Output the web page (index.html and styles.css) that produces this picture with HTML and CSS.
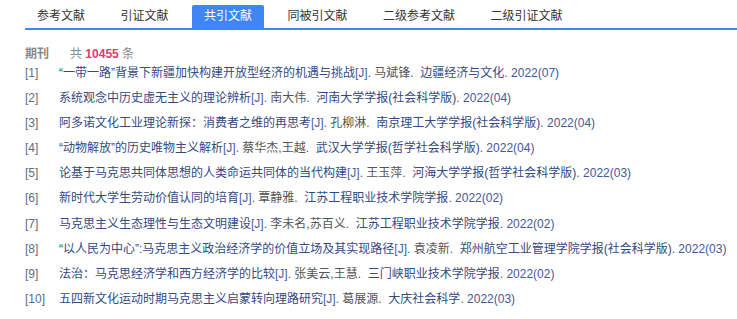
FILE: index.html
```html
<!DOCTYPE html>
<html lang="zh-CN">
<head>
<meta charset="utf-8">
<title>共引文献</title>
<link rel="stylesheet" href="styles.css">
</head>
<body>
<div class="page">
  <div class="tabs">
    <span class="tab">参考文献</span>
    <span class="tab">引证文献</span>
    <span class="tab active">共引文献</span>
    <span class="tab">同被引文献</span>
    <span class="tab">二级参考文献</span>
    <span class="tab">二级引证文献</span>
  </div>
  <div class="summary">
    <span class="kind">期刊</span>
    <span class="count">共 <b class="num">10455</b> 条</span>
  </div>
  <ul class="list">
    <li><span class="idx">[1]</span><span class="ttl">“一带一路”背景下新疆加快构建开放型经济的机遇与挑战</span><span class="tp">[J]</span><span class="au">. 马斌锋.&nbsp; </span><span class="jn">边疆经济与文化</span><span class="au">. </span><span class="yr">2022(07)</span></li>
    <li><span class="idx">[2]</span><span class="ttl">系统观念中历史虚无主义的理论辨析</span><span class="tp">[J]</span><span class="au">. 南大伟.&nbsp; </span><span class="jn">河南大学学报(社会科学版)</span><span class="au">. </span><span class="yr">2022(04)</span></li>
    <li><span class="idx">[3]</span><span class="ttl">阿多诺文化工业理论新探：消费者之维的再思考</span><span class="tp">[J]</span><span class="au">. 孔柳淋.&nbsp; </span><span class="jn">南京理工大学学报(社会科学版)</span><span class="au">. </span><span class="yr">2022(04)</span></li>
    <li><span class="idx">[4]</span><span class="ttl">“动物解放”的历史唯物主义解析</span><span class="tp">[J]</span><span class="au">. 蔡华杰,王越.&nbsp; </span><span class="jn">武汉大学学报(哲学社会科学版)</span><span class="au">. </span><span class="yr">2022(04)</span></li>
    <li><span class="idx">[5]</span><span class="ttl">论基于马克思共同体思想的人类命运共同体的当代构建</span><span class="tp">[J]</span><span class="au">. 王玉萍.&nbsp; </span><span class="jn">河海大学学报(哲学社会科学版)</span><span class="au">. </span><span class="yr">2022(03)</span></li>
    <li><span class="idx">[6]</span><span class="ttl">新时代大学生劳动价值认同的培育</span><span class="tp">[J]</span><span class="au">. 覃静雅.&nbsp; </span><span class="jn">江苏工程职业技术学院学报</span><span class="au">. </span><span class="yr">2022(02)</span></li>
    <li><span class="idx">[7]</span><span class="ttl">马克思主义生态理性与生态文明建设</span><span class="tp">[J]</span><span class="au">. 李未名,苏百义.&nbsp; </span><span class="jn">江苏工程职业技术学院学报</span><span class="au">. </span><span class="yr">2022(02)</span></li>
    <li><span class="idx">[8]</span><span class="ttl">“以人民为中心”:马克思主义政治经济学的价值立场及其实现路径</span><span class="tp">[J]</span><span class="au">. 袁凌新.&nbsp; </span><span class="jn">郑州航空工业管理学院学报(社会科学版)</span><span class="au">. </span><span class="yr">2022(03)</span></li>
    <li><span class="idx">[9]</span><span class="ttl">法治：马克思经济学和西方经济学的比较</span><span class="tp">[J]</span><span class="au">. 张美云,王慧.&nbsp; </span><span class="jn">三门峡职业技术学院学报</span><span class="au">. </span><span class="yr">2022(02)</span></li>
    <li><span class="idx">[10]</span><span class="ttl">五四新文化运动时期马克思主义启蒙转向理路研究</span><span class="tp">[J]</span><span class="au">. 葛展源.&nbsp; </span><span class="jn">大庆社会科学</span><span class="au">. </span><span class="yr">2022(03)</span></li>
  </ul>
</div>
</body>
</html>
```

FILE: styles.css
```css
* { box-sizing: border-box; }
html, body { margin: 0; padding: 0; background: #fff; }
body {
  font-family: "Liberation Sans", "Noto Sans CJK SC", sans-serif;
  font-size: 12px;
  color: #555;
}
.page { padding: 5px 0 0 25px; }
.tabs {
  display: flex;
  gap: 11.5px;
  border-bottom: 2px solid #3f86f4;
  height: 25px;
}
.tab {
  padding: 0 12px;
  height: 23px;
  line-height: 23px;
  color: #333;
  white-space: nowrap;
  border-radius: 2px 2px 0 0;
}
.tab.active { background: #3f86f4; color: #fff; }
.summary {
  display: flex;
  align-items: center;
  gap: 21px;
  height: 31px;
  padding-top: 13px;
}
.kind { font-weight: bold; color: #888; font-size: 12px; }
.count { color: #888; }
.num { color: #d0426f; font-weight: bold; }
.list { list-style: none; margin: 0; padding: 0; }
.list li {
  display: flex;
  height: 25.1px;
  line-height: 25px;
  white-space: nowrap;
}
.idx { width: 34px; color: #5e6b88; flex: none; }
.ttl, .jn { color: #334a82; }
.tp { color: #4a5f99; }
.au { color: #555; white-space: pre; }
.yr { color: #42599a; }
```
